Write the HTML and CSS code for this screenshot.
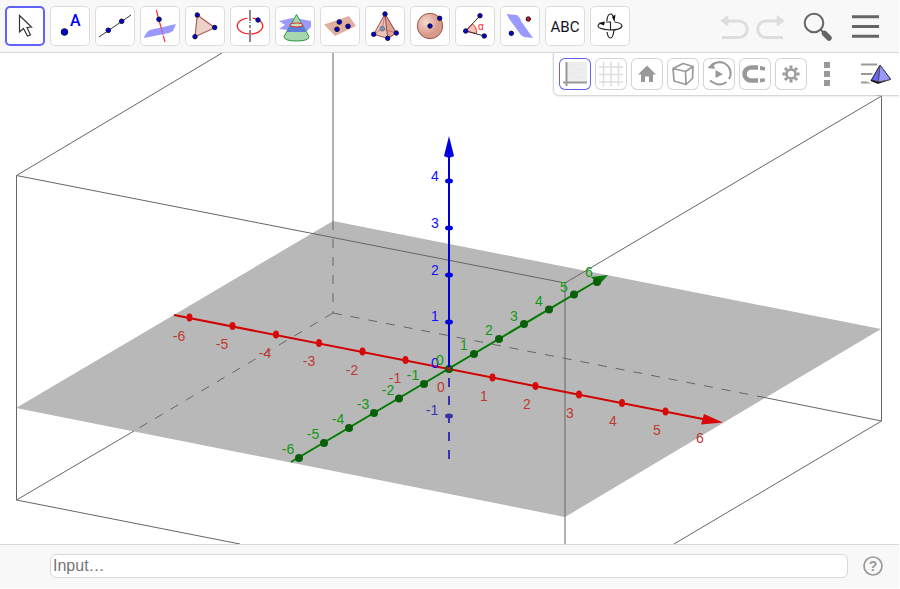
FILE: index.html
```html
<!DOCTYPE html>
<html lang="en">
<head>
<meta charset="utf-8">
<title>3D Graphics</title>
<link rel="stylesheet" href="styles.css">
</head>
<body>
<header class="toolbar">
  <div class="tools">
    <button class="tool selected" aria-label="Move"><svg viewBox="0 0 40 40"><path d="M14.5 9.500V26L18.500 22.500L22.500 30L25.500 29L22 21.500L26.500 21Z" fill="#fff" stroke="#333" stroke-width="1.200"/></svg></button>
    <button class="tool" aria-label="Point"><svg viewBox="0 0 40 40"><circle class="dot" cx="14.500" cy="26" r="3.300"/><text class="letter" x="20" y="20">A</text></svg></button>
    <button class="tool" aria-label="Line"><svg viewBox="0 0 40 40"><path d="M4 31L36 9" stroke="#333"/><circle class="dot" cx="13.300" cy="24.300" r="2.300"/><circle class="dot" cx="26.700" cy="15.300" r="2.300"/></svg></button>
    <button class="tool" aria-label="Perpendicular Line"><svg viewBox="0 0 40 40"><path d="M4 32C5 28 8 24 12 23.500L36 18L33 25L29 27Z" fill="#99f"/><path d="M16.300 4L21 21.500M23.300 30L25 36" stroke="#f33" stroke-width="1.200"/><path d="M21 21.500L23.300 30" stroke="#d36" stroke-dasharray="2 1"/><circle class="dot" cx="19" cy="13.300" r="2.300"/></svg></button>
    <button class="tool" aria-label="Polygon"><svg viewBox="0 0 40 40"><path d="M12.300 9L29.700 21.700L10 30.700Z" fill="#edd2ca" stroke="#a9605a" stroke-width="1.200"/><circle class="dot" cx="12.300" cy="9" r="2.200"/><circle class="dot" cx="29.700" cy="21.500" r="2.200"/><circle class="dot" cx="10" cy="30.700" r="2.200"/></svg></button>
    <button class="tool" aria-label="Circle with Axis through Point"><svg viewBox="0 0 40 40"><ellipse cx="20" cy="20" rx="12.700" ry="8" fill="none" stroke="#f11" stroke-width="1.200"/><path d="M20 9V14" stroke="#fff" stroke-width="5"/><path d="M20 4V15M20 16V17M20 19V22M20 24V36" stroke="#888" stroke-width="2"/><circle class="dot" cx="28" cy="14" r="2.200"/></svg></button>
    <button class="tool" aria-label="Intersect Two Surfaces"><svg viewBox="0 0 40 40"><path d="M4 15L17 12L36 17V21L31 26L4 23L10 19Z" fill="#9a9aff"/><path d="M4 15L14 15.500L20 12L36 15V18Z" fill="#9a9aff"/><path d="M21.500 8.500L9 30.500Q9 35 21.500 35Q34 35 34 30.500Z" fill="#a8d6ae" stroke="#2a9a3a"/><path d="M15 20H28L31 26H11.500Z" fill="#5d7ddd"/><ellipse cx="21.500" cy="19" rx="6.500" ry="2" fill="#c2e2ba" stroke="#e22"/></svg></button>
    <button class="tool" aria-label="Plane through 3 Points"><svg viewBox="0 0 40 40"><path d="M4 18.500L29 10L36 20L15 30Z" fill="#dfaf9f"/><circle class="dot" cx="19.300" cy="16" r="2.300"/><circle class="dot" cx="28" cy="20.300" r="2.300"/><circle class="dot" cx="17" cy="23.300" r="2.300"/></svg></button>
    <button class="tool" aria-label="Pyramid"><svg viewBox="0 0 40 40"><path d="M20 8L8.700 28.300L22.700 32.300L31.300 27Z" fill="#eac5bc" stroke="#a34a44"/><path d="M20 8L22.700 32.300L31.300 27Z" fill="#dba397" stroke="#a34a44"/><path d="M8.700 28.300L17.300 22.700L31.300 27M17.300 22.700L20 8" fill="none" stroke="#b66" stroke-width=".8"/><circle cx="17.300" cy="22.700" r="2.300" fill="#8291bb" stroke="#677"/><circle class="dot" cx="20" cy="8" r="2.200"/><circle class="dot" cx="8.700" cy="28.300" r="2.200"/><circle class="dot" cx="22.700" cy="32.300" r="2.200"/><circle class="dot" cx="31.300" cy="27" r="2.200"/></svg></button>
    <button class="tool" aria-label="Sphere: Center and Point"><svg viewBox="0 0 40 40"><defs><radialGradient id="ball" cx=".35" cy=".35"><stop offset="0" stop-color="#f6d8ce"/><stop offset="1" stop-color="#d79b8c"/></radialGradient></defs><circle cx="20" cy="20" r="12.700" fill="url(#ball)" stroke="#a5544d"/><circle class="dot" cx="20" cy="20" r="2.200"/><circle class="dot" cx="29.700" cy="12.300" r="2.200"/></svg></button>
    <button class="tool" aria-label="Angle"><svg viewBox="0 0 40 40"><path d="M10.700 25L17.500 18Q22 21 21.500 27.500Z" fill="#f3c4bd" stroke="#e33"/><path d="M25 9.700L10.700 25L29.300 30" fill="none" stroke="#333"/><text class="alpha" x="23" y="24">α</text><circle class="dot" cx="25" cy="9.700" r="2.200"/><circle class="dot" cx="10.700" cy="25" r="2.200"/><circle class="dot" cx="29.300" cy="30" r="2.200"/></svg></button>
    <button class="tool" aria-label="Reflect about Plane"><svg viewBox="0 0 40 40"><path d="M6.500 8L17 9Q20 11 21 15L33 32L24 31Q20 29 18 25L10 14Z" fill="#99f"/><circle class="dot" cx="11.300" cy="27.300" r="2.200"/><circle class="dot red" cx="28.300" cy="13" r="2.200"/></svg></button>
    <button class="tool" aria-label="Text"><svg viewBox="0 0 40 40"><text class="abc" x="20" y="26">ABC</text></svg></button>
    <button class="tool" aria-label="Rotate 3D Graphics View"><svg viewBox="0 0 40 40"><path d="M16.800 15Q17.500 8 20.500 8Q23 8 24 13M24 24Q23 32 20.500 32Q18 32 17 26M24.500 16Q32 17 32 20Q31 24 20 24Q8 23 8 20Q8 18 12 17M16 16H21M20.500 16V24" fill="none" stroke="#222" stroke-width="1.200"/><path d="M8 17L15 15.500L14 19.500ZM22 11L25.500 8.500L24.500 16Z" fill="#111"/></svg></button>
  </div>
  <div class="actions">
    <button class="action" aria-label="Undo" disabled><svg viewBox="0 0 30 40"><path d="M8 15H20A8 8 0 0 1 20 31.500H3" fill="none" stroke="#ddd" stroke-width="3"/><path d="M1 14.700L9.300 9V20.500Z" fill="#ddd"/></svg></button>
    <button class="action" aria-label="Redo" disabled><svg viewBox="0 0 30 40"><path d="M22 15H10A8 8 0 0 0 10 31.500H27" fill="none" stroke="#ddd" stroke-width="3"/><path d="M29 14.700L20.700 9V20.500Z" fill="#ddd"/></svg></button>
    <button class="action search" aria-label="Search"><svg viewBox="0 0 30 40"><circle cx="11" cy="17" r="9.300" fill="none" stroke="#666" stroke-width="2"/><path d="M17 23L21 27" stroke="#666" stroke-width="2"/><path d="M21.500 27.500L26 32" stroke="#666" stroke-width="5.500" stroke-linecap="round"/></svg></button>
    <button class="action menu" aria-label="Menu"><svg viewBox="0 0 30 40"><path d="M2 10.800H29M2 20.500H29M2 30.200H29" stroke="#666" stroke-width="3"/></svg></button>
  </div>
</header>

<main class="view">
  <svg class="scene" viewBox="0 53 899 491" preserveAspectRatio="xMidYMid slice" role="img" aria-label="3D coordinate system">
    <path class="plane" d="M333 221L881 329L565 517L16 408Z"/>
    <path class="edge" d="M222 53L16.500 175.500V500L240 544M16.500 175.500L565 283L881.500 96V421L674 544M16.500 500L134 431M762 397L881.500 421M640 48L881.500 96"/>
    <path class="edge" d="M333 53V221M565 283V544"/>
    <path class="edge hidden" d="M333 221V313M333 313L134 431M333 313L762 397"/>

    <path class="z-axis below" d="M449 378V461"/>
    <ellipse class="z-mark below" cx="449" cy="416" rx="4" ry="2.500"/>

    <path class="x-axis" d="M174 315L708 420"/>
    <path class="x-mark" d="M704 414L723 422.500L701 424.500Z"/>
    <g class="x-mark">
      <ellipse cx="189.500" cy="317.500" rx="3" ry="4"/><ellipse cx="232.500" cy="326" rx="3" ry="4"/><ellipse cx="276" cy="334.500" rx="3" ry="4"/><ellipse cx="319" cy="343" rx="3" ry="4"/><ellipse cx="362.500" cy="351.500" rx="3" ry="4"/><ellipse cx="405.500" cy="360" rx="3" ry="4"/><ellipse cx="492.500" cy="377.500" rx="3" ry="4"/><ellipse cx="535.500" cy="386" rx="3" ry="4"/><ellipse cx="579" cy="394.500" rx="3" ry="4"/><ellipse cx="622" cy="403" rx="3" ry="4"/><ellipse cx="665.500" cy="411.500" rx="3" ry="4"/>
    </g>

    <path class="y-axis" d="M291 462L600 279"/>
    <path class="y-mark arrow" d="M608 275L591 277L599 285Z"/>
    <g class="y-mark">
      <circle cx="299" cy="458" r="4"/><circle cx="324" cy="443" r="4"/><circle cx="349" cy="428" r="4"/><circle cx="374" cy="413" r="4"/><circle cx="399" cy="398.500" r="4"/><circle cx="424" cy="384" r="4"/><circle cx="449" cy="369" r="4"/><circle cx="474" cy="354" r="4"/><circle cx="499" cy="339" r="4"/><circle cx="524" cy="324" r="4"/><circle cx="549" cy="309.500" r="4"/><circle cx="574" cy="294.500" r="4"/><circle cx="597" cy="282" r="4"/>
    </g>

    <path class="z-axis" d="M449 368V155"/>
    <circle cx="449" cy="369" r="2" fill="#a22"/>
    <path class="z-mark" d="M449 136L454 156Q449 159 444 156Z"/>
    <g class="z-mark">
      <ellipse cx="449" cy="181" rx="4" ry="2.500"/><ellipse cx="449" cy="228" rx="4" ry="2.500"/><ellipse cx="449" cy="275" rx="4" ry="2.500"/><ellipse cx="449" cy="322" rx="4" ry="2.500"/>
    </g>

    <g class="label z-label">
      <text x="435" y="181">4</text><text x="435" y="228">3</text><text x="435" y="275">2</text><text x="435" y="321">1</text><text x="435" y="368">0</text><text class="faded" x="432" y="415">-1</text>
    </g>
    <g class="label y-label">
      <text x="288" y="454">-6</text><text x="313" y="439">-5</text><text x="338" y="424">-4</text><text x="363" y="409">-3</text><text x="388" y="395">-2</text><text x="413" y="380">-1</text><text x="440" y="365">0</text><text x="464" y="350">1</text><text x="489" y="335">2</text><text x="514" y="321">3</text><text x="539" y="306">4</text><text x="564" y="292">5</text><text x="589" y="277">6</text>
    </g>
    <g class="label x-label">
      <text x="179" y="341">-6</text><text x="222" y="349">-5</text><text x="265" y="358">-4</text><text x="309" y="366">-3</text><text x="352" y="375">-2</text><text x="395" y="383">-1</text><text x="441" y="392">0</text><text x="484" y="401">1</text><text x="527" y="409">2</text><text x="570" y="418">3</text><text x="613" y="426">4</text><text x="657" y="435">5</text><text x="700" y="443">6</text>
    </g>
  </svg>

  <div class="stylebar">
    <button class="option selected" aria-label="Show axes"><svg viewBox="0 0 32 32"><path d="M8 4H28V24H8Z" fill="#eee"/><path d="M10 7h1m4 0h1m4 0h1m4 0h1M12 11h1m4 0h1m4 0h1M10 15h1m4 0h1m4 0h1m4 0h1M12 19h1m4 0h1m4 0h1" stroke="#ddd"/><path d="M7.500 4V28M4 24.500H28" stroke="#999" stroke-width="2"/></svg></button>
    <button class="option" aria-label="Show grid"><svg viewBox="0 0 32 32"><path d="M8.500 4V28M16 4V28M23.500 4V28M4 9H28M4 16.500H28M4 24H28" stroke="#ddd" stroke-width="1.500"/></svg></button>
    <button class="option" aria-label="Standard view"><svg viewBox="0 0 32 32"><path d="M16 7.500L25 16.500H22V24H18V18.500H14V24H10V16.500H7Z" fill="#999"/></svg></button>
    <button class="option" aria-label="View direction"><svg viewBox="0 0 32 32"><path d="M6 10.500L16 5.500L26 8.500L18.500 13.500ZM6 10.500L7 23L19 26.500L18.500 13.500M19 26.500L25.500 20.500L26 8.500" fill="none" stroke="#999" stroke-width="1.700" stroke-linejoin="round"/></svg></button>
    <button class="option" aria-label="Rotate view"><svg viewBox="0 0 32 32"><path d="M7 9.500A11 11 0 0 1 26 21M23.500 24Q16 29.500 7 22.500" fill="none" stroke="#999" stroke-width="2"/><path d="M4.500 10L10 4.500L12 11ZM12.500 12L20 16.200L12.500 20Z" fill="#999"/></svg></button>
    <button class="option" aria-label="Point capturing"><svg viewBox="0 0 32 32"><path d="M19 9.500H12A6 6 0 0 0 12 22.500H19" fill="none" stroke="#999" stroke-width="4.500"/><path d="M21 8L26 9V12.500L21 12ZM21 20.500H26V23.500L21 24.500Z" fill="#999"/></svg></button>
    <button class="option" aria-label="Settings"><svg viewBox="0 0 32 32"><circle cx="16" cy="16" r="4.500" fill="none" stroke="#999" stroke-width="2.500"/><path d="M16 7.500V10.500M16 21.500V24.500M7.500 16H10.500M21.500 16H24.500M10 10L12 12M20 20L22 22M10 22L12 20M20 12L22 10" stroke="#999" stroke-width="3"/></svg></button>
    <button class="option plain more" aria-label="More"><svg viewBox="0 0 32 32"><path d="M13 4H19V10H13ZM13 13H19V19H13ZM13 22H19V28H13Z" fill="#999"/></svg></button>
    <button class="option plain views" aria-label="Views"><svg viewBox="0 0 32 32"><path d="M2 6.500H18M2 16H16M2 24.500H14" stroke="#999" stroke-width="2"/><path d="M21 5L10 23.500L19 27L34 22Z" stroke="#fff" stroke-width="2"/><path d="M21 7L12.500 22L19.500 24Z" fill="#66f" stroke="#333"/><path d="M21 7L19.500 24L31.500 21.500Z" fill="#99f" stroke="#555"/></svg></button>
  </div>
</main>

<footer class="inputbar">
  <input class="entry" type="text" placeholder="Input…" aria-label="Input">
  <button class="help" aria-label="Help"><svg viewBox="0 0 22 22"><circle cx="11" cy="11" r="9" fill="none" stroke="#999" stroke-width="1.700"/><text x="11" y="16">?</text></svg></button>
</footer>
</body>
</html>
```
FILE: styles.css
```css
* {
  box-sizing: border-box;
}

body {
  display: flex;
  flex-direction: column;
  height: 100vh;
  margin: 0;
  padding: 0 1px 1px 0;
  overflow: hidden;
  background: #fff;
  font-family: "Liberation Sans", Arial, sans-serif;
}

button {
  padding: 0;
  border: 0;
  background: none;
}

button svg {
  display: block;
  width: 100%;
  height: 100%;
}

.toolbar {
  display: flex;
  flex: none;
  justify-content: space-between;
  padding: 6px 17px 6px 5px;
  border-bottom: 1px solid #d8d8d8;
  background: #f8f8f8;
}

.tools {
  display: flex;
  gap: 5px;
}

.tool {
  width: 40px;
  height: 40px;
  border-radius: 5px;
  background: #fff;
  box-shadow: inset 0 0 0 1px #dcdcdc;
}

.tool.selected {
  box-shadow: inset 0 0 0 2px #6161ff;
}

.dot {
  fill: #00d;
  stroke: #113;
}

.dot.red {
  fill: #d11;
}

.letter {
  fill: #00e;
  font: 500 16px Roboto, sans-serif;
}

.alpha {
  fill: #f22;
  font: 10px "Liberation Sans", sans-serif;
}

.abc {
  fill: #112;
  font: 15px Roboto, sans-serif;
  text-anchor: middle;
}

.actions {
  display: flex;
}

.action {
  width: 30px;
  height: 40px;
  margin-right: 7px;
}

.search {
  margin: 0 17px 0 10px;
}

.menu {
  margin-right: 2px;
}

.view {
  position: relative;
  flex: 1;
  min-height: 0;
}

.scene {
  display: block;
  width: 100%;
  height: 100%;
}

.plane {
  fill: #b8b8b8;
}

.edge {
  fill: none;
  stroke: #666;
}

.edge.hidden {
  stroke: #666;
  stroke-dasharray: 9 9;
}

.x-axis {
  stroke: #d00000;
  stroke-width: 2px;
}

.x-mark {
  fill: #d80808;
}

.y-axis {
  stroke: #007c00;
  stroke-width: 2px;
}

.y-mark {
  fill: #0a5f0a;
}

.y-mark.arrow {
  fill: #087a08;
}

.z-axis {
  stroke: #0000d0;
  stroke-width: 2px;
}

.z-mark {
  fill: #0000e0;
}

.z-axis.below {
  stroke: #3434b0;
  stroke-dasharray: 9 9;
}

.z-mark.below {
  fill: #3434a8;
}

.label {
  font-size: 14px;
  text-anchor: middle;
}

.x-label {
  fill: #c03a30;
}

.y-label {
  fill: #109a10;
}

.z-label {
  fill: #1010ff;
}

.faded {
  fill: #3434b8;
}

.stylebar {
  position: absolute;
  top: 0;
  right: 0;
  display: flex;
  gap: 4px;
  padding: 5px 8px 5px 5px;
  border-bottom-left-radius: 5px;
  background: #fff;
  box-shadow: 0 0 2px 1px #ccc;
  clip-path: inset(0 0 -4px -4px);
}

.option {
  width: 32px;
  height: 32px;
  border-radius: 6px;
  background: #fff;
  box-shadow: inset 0 0 0 1px #d4d4d4;
}

.option.selected {
  box-shadow: inset 0 0 0 1px #6161ff;
}

.option.plain {
  box-shadow: none;
}

.views {
  margin-left: 12px;
}

.inputbar {
  display: flex;
  flex: none;
  align-items: center;
  gap: 14px;
  padding: 9px 15px 10px 50px;
  border-top: 1px solid #d8d8d8;
  background: #f8f8f8;
}

.entry {
  flex: 1;
  min-width: 0;
  height: 24px;
  padding: 0 2px;
  border: 1px solid #d8d8d8;
  border-radius: 6px;
  background: #fff;
  font: 16px "Liberation Sans", Arial, sans-serif;
}

.entry::placeholder {
  color: #757575;
}

.help {
  width: 22px;
  height: 22px;
}

.help text {
  fill: #999;
  font: bold 14px "Liberation Sans", Arial, sans-serif;
  text-anchor: middle;
}
```
